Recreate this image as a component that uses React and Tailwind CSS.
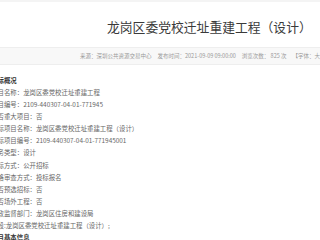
import React from "react";

const lines = [
    { text: "一、招标概况", bold: true },
    { text: "项目名称：龙岗区委党校迁址重建工程" },
    { text: "项目编号：2109-440307-04-01-771945" },
    { text: "是否重大项目：否" },
    { text: "招标项目名称：龙岗区委党校迁址重建工程（设计）" },
    { text: "招标项目编号：2109-440307-04-01-771945001" },
    { text: "业务类型：设计" },
    { text: "招标方式：公开招标" },
    { text: "资格审查方式：投标报名" },
    { text: "是否预选招标：否" },
    { text: "是否场外工程：否" },
    { text: "行政监督部门：龙岗区住房和建设局" },
    { text: "标段:龙岗区委党校迁址重建工程（设计）;" },
    { text: "二、项目基本信息", bold: true },
];

export default function App() {
    return (
        <div
            className="w-[320px] h-[240px] overflow-hidden bg-white"
            style={{ fontFamily: '"Noto Sans CJK SC", "Noto Sans", sans-serif' }}
        >
            <div className="h-[2px] bg-[#f4f4f4]" />

            {/* title */}
            <div className="pt-[17px] pl-[107px] h-[45px]">
                <h1 className="text-[12.8px] leading-[16px] text-[#3a3a3a] whitespace-nowrap">
                    龙岗区委党校迁址重建工程（设计）
                </h1>
            </div>

            {/* meta bar */}
            <div className="h-[18px] bg-[#f8f8f8] border-y border-[#eeeeee] flex items-center pl-[80px] gap-[6px] whitespace-nowrap text-[5.5px] text-[#9a9a9a]">
                <span>来源：深圳公共资源交易中心</span>
                <span>发布时间：2021-09-09 09:00:00</span>
                <span>浏览次数： 825 次</span>
                <span>【字体：大 中 小】</span>
            </div>

            {/* content */}
            <div className="pt-[10px] -ml-[8.8px] text-[6.4px] leading-[12.08px] text-[#666666] whitespace-nowrap">
                {lines.map((l, i) => (
                    <p
                        key={i}
                        className={
                            l.bold
                                ? "font-bold text-[#333333] -ml-[12.8px]"
                                : ""
                        }
                    >
                        {l.text}
                    </p>
                ))}
            </div>
        </div>
    );
}
